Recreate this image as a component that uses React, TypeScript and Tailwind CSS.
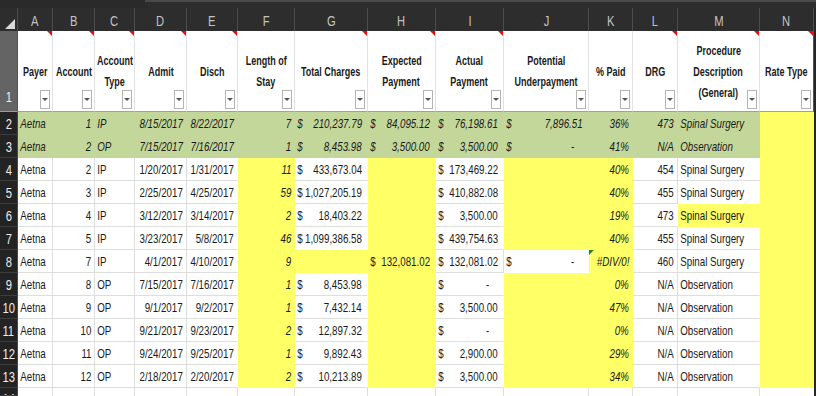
import React from "react";

type Fill = "w" | "g" | "y";
type C = { k?: "t" | "n" | "a"; v?: string; f: Fill; it?: boolean; err?: boolean };

const GRID =
  "grid grid-cols-[18px_35px_42px_40px_52px_51px_57px_73px_68px_68px_85px_44px_45px_82px_54px_2px]";
const FONT = "font-['Liberation_Sans',Arial,sans-serif]";

const LETTERS = ["A", "B", "C", "D", "E", "F", "G", "H", "I", "J", "K", "L", "M", "N"];

type H = { lines: string[]; comment: boolean };
const HEADERS: H[] = [
  { lines: ["Payer"], comment: true },
  { lines: ["Account"], comment: true },
  { lines: ["Account", "Type"], comment: true },
  { lines: ["Admit"], comment: true },
  { lines: ["Disch"], comment: true },
  { lines: ["Length of", "Stay"], comment: false },
  { lines: ["Total Charges"], comment: true },
  { lines: ["Expected", "Payment"], comment: true },
  { lines: ["Actual", "Payment"], comment: true },
  { lines: ["Potential", "Underpayment"], comment: false },
  { lines: ["% Paid"], comment: false },
  { lines: ["DRG"], comment: true },
  { lines: ["Procedure", "Description", "(General)"], comment: true },
  { lines: ["Rate Type"], comment: true },
];

function greenRow(v: string[]): C[] {
  const kinds: ("t" | "n" | "a")[] = ["t", "n", "t", "n", "n", "n", "a", "a", "a", "a", "n", "n", "t"];
  const cells: C[] = v.map((x, i) => ({ k: kinds[i], v: x, f: "g", it: true }));
  cells.push({ f: "y" });
  return cells;
}

function bodyRow(
  acct: string,
  type: string,
  admit: string,
  disch: string,
  los: string,
  charges: string | null,
  actual: string,
  pct: string,
  drg: string,
  proc: string
): C[] {
  return [
    { k: "t", v: "Aetna", f: "w" },
    { k: "n", v: acct, f: "w" },
    { k: "t", v: type, f: "w" },
    { k: "n", v: admit, f: "w" },
    { k: "n", v: disch, f: "w" },
    { k: "n", v: los, f: "y", it: true },
    charges === null ? { f: "y" } : { k: "a", v: charges, f: "w" },
    { f: "y" },
    { k: "a", v: actual, f: "w" },
    { f: "y" },
    { k: "n", v: pct, f: "y", it: true },
    { k: "n", v: drg, f: "w" },
    { k: "t", v: proc, f: "w" },
    { f: "y" },
  ];
}

const SS = "Spinal Surgery";
const OB = "Observation";

const r6 = bodyRow("4", "IP", "3/12/2017", "3/14/2017", "2", "18,403.22", "3,500.00", "19%", "473", SS);
r6[12] = { k: "t", v: SS, f: "y" };
const r8 = bodyRow("7", "IP", "4/1/2017", "4/10/2017", "9", null, "132,081.02", "#DIV/0!", "460", SS);
r8[7] = { k: "a", v: "132,081.02", f: "y" };
r8[9] = { k: "a", v: "-", f: "w" };
r8[10] = { k: "n", v: "#DIV/0!", f: "y", it: true, err: true };

const ROWS: C[][] = [
  greenRow(["Aetna", "1", "IP", "8/15/2017", "8/22/2017", "7", "210,237.79", "84,095.12", "76,198.61", "7,896.51", "36%", "473", SS]),
  greenRow(["Aetna", "2", "OP", "7/15/2017", "7/16/2017", "1", "8,453.98", "3,500.00", "3,500.00", "-", "41%", "N/A", OB]),
  bodyRow("2", "IP", "1/20/2017", "1/31/2017", "11", "433,673.04", "173,469.22", "40%", "454", SS),
  bodyRow("3", "IP", "2/25/2017", "4/25/2017", "59", "1,027,205.19", "410,882.08", "40%", "455", SS),
  r6,
  bodyRow("5", "IP", "3/23/2017", "5/8/2017", "46", "1,099,386.58", "439,754.63", "40%", "455", SS),
  r8,
  bodyRow("8", "OP", "7/15/2017", "7/16/2017", "1", "8,453.98", "-", "0%", "N/A", OB),
  bodyRow("9", "OP", "9/1/2017", "9/2/2017", "1", "7,432.14", "3,500.00", "47%", "N/A", OB),
  bodyRow("10", "OP", "9/21/2017", "9/23/2017", "2", "12,897.32", "-", "0%", "N/A", OB),
  bodyRow("11", "OP", "9/24/2017", "9/25/2017", "1", "9,892.43", "2,900.00", "29%", "N/A", OB),
  bodyRow("12", "OP", "2/18/2017", "2/20/2017", "2", "10,213.89", "3,500.00", "34%", "N/A", OB),
];

const WHITE_ROW: C[] = Array.from({ length: 14 }, () => ({ f: "w" as Fill }));

function fillBg(f: Fill) {
  if (f === "g") return "bg-[#c4d79b]";
  if (f === "y") return "bg-[#ffff66]";
  return "bg-white";
}

function NumBox({ v, pr }: { v?: string; pr: string }) {
  return (
    <div className={`flex-1 min-w-0 flex justify-end ${pr}`}>
      <span className="inline-block shrink-0 whitespace-nowrap scale-x-[0.75] origin-right">{v}</span>
    </div>
  );
}

function Cell({ c, right, below }: { c: C; right?: C; below?: C }) {
  const rb = c.f === "w" && right && right.f === "w" ? "border-r-[#dedede]" : "border-r-transparent";
  const bb = c.f === "w" && below && below.f === "w" ? "border-b-[#dedede]" : "border-b-transparent";
  const it = c.it ? "italic" : "";
  let content: React.ReactNode = null;
  if (c.k === "t") {
    content = (
      <span className="inline-block pl-[3px] whitespace-nowrap scale-x-[0.75] origin-left">{c.v}</span>
    );
  } else if (c.k === "n") {
    content = <NumBox v={c.v} pr="pr-[3px]" />;
  } else if (c.k === "a") {
    content = (
      <>
        <span className="inline-block pl-[3px] scale-x-[0.75] origin-left">$</span>
        <NumBox v={c.v} pr={c.v === "-" ? "pr-[14px]" : "pr-[5px]"} />
      </>
    );
  }
  return (
    <div
      className={`relative flex items-center pt-[2px] border-r border-b ${rb} ${bb} ${fillBg(c.f)} ${it} text-[13px] text-[#1a1a1a] overflow-hidden`}
    >
      {content}
      {c.err && (
        <div className="absolute left-0 top-0 w-0 h-0 border-t-[5px] border-t-[#1a8a1a] border-r-[5px] border-r-transparent" />
      )}
    </div>
  );
}

function RowHead({ n, clip }: { n: number; clip?: boolean }) {
  return (
    <div
      className={`flex ${clip ? "items-start pt-[1px]" : "items-center pt-[2px]"} justify-center bg-[#232323] border-b border-[#3d3d3d] border-r border-r-[#4a4a4a] text-[14px] text-[#ededed] overflow-hidden`}
    >
      <span className="inline-block scale-x-[0.8] origin-center">{n}</span>
    </div>
  );
}

export default function App() {
  return (
    <div className={`w-[816px] h-[396px] overflow-hidden bg-[#262626] ${FONT}`}>
      {/* top strip */}
      <div className="h-[8px] flex">
        <div className="w-[145px] bg-[#2a2a2a]" />
        <div className="flex-1 flex flex-col">
          <div className="h-[2px] bg-[#4a4a4a]" />
          <div className="flex-1 bg-[#2d2d2d]" />
        </div>
      </div>
      {/* column letters */}
      <div className={`${GRID} h-[23px] bg-[#2d2d2d]`}>
        <div className="relative border-r border-[#4d4d4d]">
          <div className="absolute right-[2px] bottom-[3px] w-0 h-0 border-l-[10px] border-l-transparent border-b-[10px] border-b-[#d8d8d8]" />
        </div>
        {LETTERS.map((l) => (
          <div
            key={l}
            className="flex items-center justify-center pt-[3px] border-r border-[#4d4d4d] text-[14px] text-[#c4c4c4]"
          >
            <span className="inline-block scale-x-[0.8] origin-center">{l}</span>
          </div>
        ))}
        <div className="bg-[#262626]" />
      </div>
      {/* header row 1 */}
      <div className={`${GRID} h-[81px]`}>
        <div className="flex items-end justify-center pb-[3px] bg-[#646464] border-r border-r-[#1e7145] border-b border-b-[#9a9a9a] text-[14px] text-[#ececec]">
          <span className="inline-block scale-x-[0.8] origin-center">1</span>
        </div>
        {HEADERS.map((h, i) => (
          <div
            key={i}
            className={`relative flex flex-col items-center justify-center bg-white border-b border-b-[#a0a0a0] border-r ${
              i === 13 ? "border-r-[#1e7145]" : "border-r-[#e2e2e2]"
            } font-bold text-[12px] leading-[21px] text-[#1a1a1a] text-center pt-[2px]`}
          >
            {h.lines.map((ln, j) => (
              <span key={j} className="inline-block shrink-0 whitespace-nowrap scale-x-[0.75] origin-center">
                {ln}
              </span>
            ))}
            {h.comment && (
              <div className="absolute right-0 top-0 w-0 h-0 border-l-[5px] border-l-transparent border-t-[5px] border-t-[#e01010]" />
            )}
            <div className="absolute right-[2px] bottom-[2px] w-[10px] h-[19px] bg-white border border-[#b4b4b4] flex items-center justify-center">
              <div className="w-0 h-0 border-l-[3px] border-r-[3px] border-t-[3px] border-l-transparent border-r-transparent border-t-[#555]" />
            </div>
          </div>
        ))}
        <div className="bg-[#262626]" />
      </div>
      {/* data rows */}
      {ROWS.map((row, ri) => {
        const below = ri + 1 < ROWS.length ? ROWS[ri + 1] : WHITE_ROW;
        return (
          <div key={ri} className={`${GRID} h-[23px]`}>
            <RowHead n={ri + 2} />
            {row.map((c, ci) => (
              <Cell key={ci} c={c} right={row[ci + 1]} below={below[ci]} />
            ))}
            <div className="bg-[#262626]" />
          </div>
        );
      })}
      {/* partial row 14 */}
      <div className={`${GRID} h-[8px] overflow-hidden`}>
        <RowHead n={14} clip />
        {WHITE_ROW.map((c, ci) => (
          <div key={ci} className={`bg-white border-r ${ci < 13 ? "border-r-[#dedede]" : "border-r-transparent"}`} />
        ))}
        <div className="bg-[#262626]" />
      </div>
    </div>
  );
}
